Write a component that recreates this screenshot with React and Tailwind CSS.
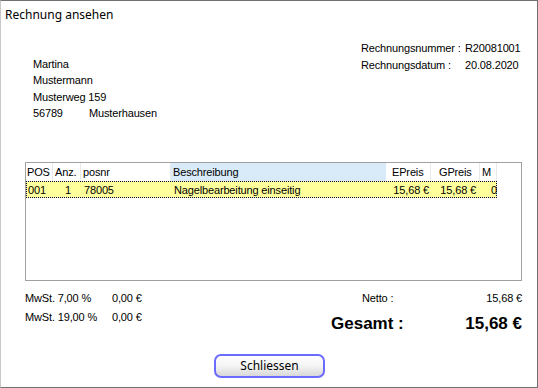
export default function App() {
  const cols = "grid grid-cols-[27px_28px_90px_215px_45px_49px_17px]";
  const sans = { fontFamily: '"Liberation Sans", Arial, sans-serif' };

  return (
    <div className="w-[538px] h-[388px] bg-white border border-[#707070] border-l-[#c8c8c8] flex flex-col text-[11px] tracking-[-0.15px] text-black" style={sans}>
      {/* TITLE */}
      <div className="h-[27px] flex items-center px-[4px] text-[12px] tracking-normal text-[#000]" style={{ fontFamily: '"Noto Sans", "Open Sans", sans-serif' }}>
        Rechnung ansehen
      </div>

      {/* HEADER */}
      <div className="flex h-[134px]">
        <div className="pl-[32px] pt-[28px] w-[330px] leading-[16.3px]">
          <div>Martina</div>
          <div>Mustermann</div>
          <div>Musterweg 159</div>
          <div className="flex">
            <span className="w-[56px]">56789</span>
            <span>Musterhausen</span>
          </div>
        </div>
        <div className="pt-[12px] pl-[30px] leading-[17px]">
          <div className="flex">
            <span className="w-[104px]">Rechnungsnummer :</span>
            <span>R20081001</span>
          </div>
          <div className="flex">
            <span className="w-[104px]">Rechnungsdatum :</span>
            <span>20.08.2020</span>
          </div>
        </div>
      </div>

      {/* TABLE */}
      <div className="ml-[24px] w-[497px] h-[119px] border border-[#a0a0a0]">
        <div className={`${cols} h-[18px] items-stretch`}>
          <div className="border-r border-[#e8e8e8] pl-[1px] flex items-center">POS</div>
          <div className="border-r border-[#e8e8e8] pl-[2px] flex items-center">Anz.</div>
          <div className="border-r border-[#e8e8e8] pl-[2px] flex items-center">posnr</div>
          <div className="bg-[#d9ebf9] pl-[2px] flex items-center">Beschreibung</div>
          <div className="border-r border-[#e8e8e8] pl-[6px] flex items-center">EPreis</div>
          <div className="border-r border-[#e8e8e8] pl-[8px] flex items-center">GPreis</div>
          <div className="border-r border-[#e8e8e8] pl-[2px] flex items-center">M</div>
        </div>
        <div className={`${cols} h-[17px] bg-[#ffff9c] border border-dotted border-[#000040] w-[471px]`}>
          <div className="flex items-center pl-[1px]">001</div>
          <div className="flex items-center justify-center">1</div>
          <div className="flex items-center pl-[2px]">78005</div>
          <div className="flex items-center pl-[2px]">Nagelbearbeitung einseitig</div>
          <div className="flex items-center justify-end pr-[3px]">15,68 €</div>
          <div className="flex items-center justify-end pr-[5px]">15,68 €</div>
          <div className="flex items-center justify-end pr-[1px]">0</div>
        </div>
      </div>

      {/* TOTALS */}
      <div className="flex pt-[8px] h-[73px]">
        <div className="pl-[24px] w-[330px] leading-[19px]">
          <div className="flex">
            <span className="w-[87px]">MwSt. 7,00 %</span>
            <span>0,00 €</span>
          </div>
          <div className="flex">
            <span className="w-[87px]">MwSt. 19,00 %</span>
            <span>0,00 €</span>
          </div>
        </div>
        <div className="w-[191px] flex flex-col">
          <div className="flex justify-between pl-[31px] leading-[19px]">
            <span>Netto :</span>
            <span>15,68 €</span>
          </div>
          <div className="flex justify-between text-[17px] font-bold tracking-normal mt-[6px] leading-[20px]">
            <span>Gesamt :</span>
            <span>15,68 €</span>
          </div>
        </div>
      </div>

      {/* ACTIONS */}
      <div className="flex justify-center pl-[1px]">
        <button
          className="w-[111px] h-[24px] rounded-[7px] border-2 border-[#6b6bff] bg-gradient-to-b from-white via-[#f4f4f4] to-[#d8d8d8] text-[12px] tracking-normal"
          style={{ fontFamily: '"Noto Sans", "Open Sans", sans-serif' }}
        >
          Schliessen
        </button>
      </div>
    </div>
  );
}
